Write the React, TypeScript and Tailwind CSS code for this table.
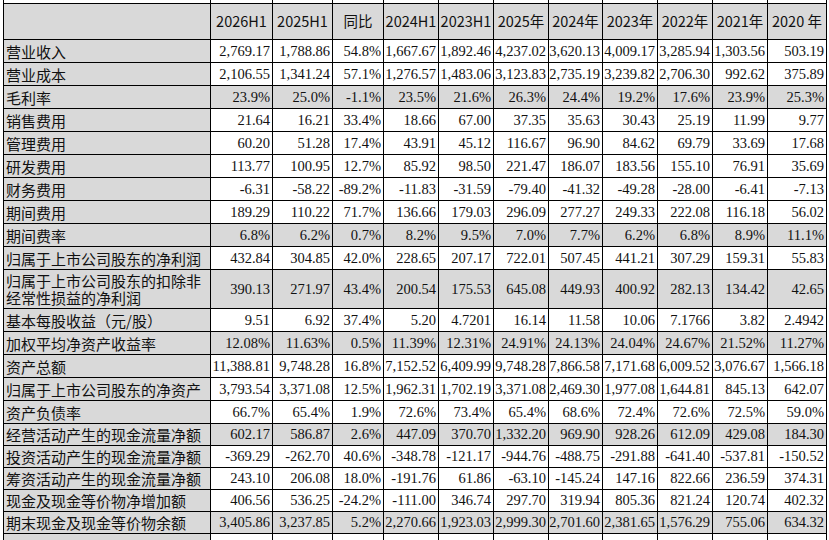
const headers = ["2026H1", "2025H1", "同比", "2024H1", "2023H1", "2025年", "2024年", "2023年", "2022年", "2021年", "2020 年"];

type Row = { label: string; values: string[]; shade?: boolean; tall?: boolean; h: string };

const rows: Row[] = [
  { label: "营业收入", h: "h-[22px]", values: ["2,769.17", "1,788.86", "54.8%", "1,667.67", "1,892.46", "4,237.02", "3,620.13", "4,009.17", "3,285.94", "1,303.56", "503.19"] },
  { label: "营业成本", h: "h-[22px]", values: ["2,106.55", "1,341.24", "57.1%", "1,276.57", "1,483.06", "3,123.83", "2,735.19", "3,239.82", "2,706.30", "992.62", "375.89"] },
  { label: "毛利率", h: "h-[22px]", shade: true, values: ["23.9%", "25.0%", "-1.1%", "23.5%", "21.6%", "26.3%", "24.4%", "19.2%", "17.6%", "23.9%", "25.3%"] },
  { label: "销售费用", h: "h-[22px]", values: ["21.64", "16.21", "33.4%", "18.66", "67.00", "37.35", "35.63", "30.43", "25.19", "11.99", "9.77"] },
  { label: "管理费用", h: "h-[22px]", values: ["60.20", "51.28", "17.4%", "43.91", "45.12", "116.67", "96.90", "84.62", "69.79", "33.69", "17.68"] },
  { label: "研发费用", h: "h-[22px]", values: ["113.77", "100.95", "12.7%", "85.92", "98.50", "221.47", "186.07", "183.56", "155.10", "76.91", "35.69"] },
  { label: "财务费用", h: "h-[22px]", values: ["-6.31", "-58.22", "-89.2%", "-11.83", "-31.59", "-79.40", "-41.32", "-49.28", "-28.00", "-6.41", "-7.13"] },
  { label: "期间费用", h: "h-[22px]", values: ["189.29", "110.22", "71.7%", "136.66", "179.03", "296.09", "277.27", "249.33", "222.08", "116.18", "56.02"] },
  { label: "期间费率", h: "h-[22px]", shade: true, values: ["6.8%", "6.2%", "0.7%", "8.2%", "9.5%", "7.0%", "7.7%", "6.2%", "6.8%", "8.9%", "11.1%"] },
  { label: "归属于上市公司股东的净利润", h: "h-[22px]", values: ["432.84", "304.85", "42.0%", "228.65", "207.17", "722.01", "507.45", "441.21", "307.29", "159.31", "55.83"] },
  { label: "归属于上市公司股东的扣除非经常性损益的净利润", h: "h-[38px]", shade: true, tall: true, values: ["390.13", "271.97", "43.4%", "200.54", "175.53", "645.08", "449.93", "400.92", "282.13", "134.42", "42.65"] },
  { label: "基本每股收益（元/股）", h: "h-[22px]", values: ["9.51", "6.92", "37.4%", "5.20", "4.7201", "16.14", "11.58", "10.06", "7.1766", "3.82", "2.4942"] },
  { label: "加权平均净资产收益率", h: "h-[22px]", shade: true, values: ["12.08%", "11.63%", "0.5%", "11.39%", "12.31%", "24.91%", "24.13%", "24.04%", "24.67%", "21.52%", "11.27%"] },
  { label: "资产总额", h: "h-[22px]", values: ["11,388.81", "9,748.28", "16.8%", "7,152.52", "6,409.99", "9,748.28", "7,866.58", "7,171.68", "6,009.52", "3,076.67", "1,566.18"] },
  { label: "归属于上市公司股东的净资产", h: "h-[22px]", values: ["3,793.54", "3,371.08", "12.5%", "1,962.31", "1,702.19", "3,371.08", "2,469.30", "1,977.08", "1,644.81", "845.13", "642.07"] },
  { label: "资产负债率", h: "h-[22px]", values: ["66.7%", "65.4%", "1.9%", "72.6%", "73.4%", "65.4%", "68.6%", "72.4%", "72.6%", "72.5%", "59.0%"] },
  { label: "经营活动产生的现金流量净额", h: "h-[21px]", shade: true, values: ["602.17", "586.87", "2.6%", "447.09", "370.70", "1,332.20", "969.90", "928.26", "612.09", "429.08", "184.30"] },
  { label: "投资活动产生的现金流量净额", h: "h-[21px]", values: ["-369.29", "-262.70", "40.6%", "-348.78", "-121.17", "-944.76", "-488.75", "-291.88", "-641.40", "-537.81", "-150.52"] },
  { label: "筹资活动产生的现金流量净额", h: "h-[21px]", values: ["243.10", "206.08", "18.0%", "-191.76", "61.86", "-63.10", "-145.24", "147.16", "822.66", "236.59", "374.31"] },
  { label: "现金及现金等价物净增加额", h: "h-[21px]", values: ["406.56", "536.25", "-24.2%", "-111.00", "346.74", "297.70", "319.94", "805.36", "821.24", "120.74", "402.32"] },
  { label: "期末现金及现金等价物余额", h: "h-[21px]", shade: true, values: ["3,405.86", "3,237.85", "5.2%", "2,270.66", "1,923.03", "2,999.30", "2,701.60", "2,381.65", "1,576.29", "755.06", "634.32"] },
];

const cjk = "font-['Noto_Sans_CJK_SC',sans-serif]";
const num = "font-['Liberation_Serif','Times_New_Roman',serif]";

export default function App() {
  return (
    <div className="w-[829px] h-[540px] overflow-hidden bg-white text-[#111]">
      <div className="ml-[3px] w-fit bg-black pl-px pr-px grid gap-px grid-cols-[206px_61px_59px_50px_54px_54px_54px_53px_54px_54px_54px_58px]">
        {/* strip of the row above, cut off by the crop */}
        {Array.from({ length: 12 }).map((_, i) => (
          <div key={`top-${i}`} className="h-[3px] bg-white" />
        ))}

        <div className="h-[35px] bg-[#d9d9d9]" />
        {headers.map((h) => (
          <div
            key={h}
            className={`h-[35px] bg-[#d9d9d9] flex items-center justify-center text-[14.5px] leading-none ${cjk}`}
          >
            {h}
          </div>
        ))}

        {rows.map((row) => (
          <div key={row.label} className="contents">
            <div
              className={`${row.h} bg-[#d9d9d9] flex items-center pl-[2px] text-[15px] ${row.tall ? "leading-[17px]" : "leading-none"} ${cjk}`}
            >
              {row.label}
            </div>
            {row.values.map((v, i) => (
              <div
                key={i}
                className={`${row.h} ${row.shade ? "bg-[#d9d9d9]" : "bg-white"} flex items-center justify-end pr-[2px] text-[14.5px] leading-none whitespace-nowrap ${num}`}
              >
                {v}
              </div>
            ))}
          </div>
        ))}

        {/* next row, only its top edge is visible */}
        <div className="h-[10px] bg-[#d9d9d9]" />
        {Array.from({ length: 11 }).map((_, i) => (
          <div key={`bottom-${i}`} className="h-[10px] bg-white" />
        ))}
      </div>
    </div>
  );
}
